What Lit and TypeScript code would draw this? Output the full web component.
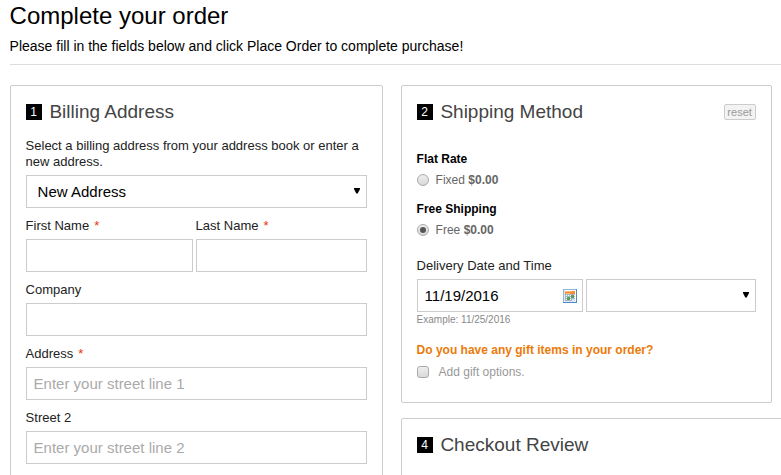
import { LitElement, html, css, nothing } from "lit";
import { customElement, property } from "lit/decorators.js";

const font = css`
  :host { box-sizing: border-box; font-family: "Liberation Sans", Arial, sans-serif; }
  *, *::before, *::after { box-sizing: border-box; }
`;

@customElement("order-panel")
class OrderPanel extends LitElement {
  @property() step = "";
  @property() heading = "";

  static styles = [font, css`
    :host { display: block; border: 1px solid #ccc; border-radius: 2px; padding: 15px; background: #fff; }
    .head { display: flex; align-items: center; height: 22px; }
    .step { width: 16px; height: 16px; margin-right: 7.8px; background: #000; color: #fff; font-size: 12px; line-height: 16px; text-align: center; }
    .title { margin: 0; flex: 1; font-size: 19px; line-height: 22px; font-weight: 400; color: #444; white-space: nowrap; }
  `];

  render() {
    return html`
      <div class="head">
        <span class="step">${this.step}</span>
        <h2 class="title">${this.heading}</h2>
        <slot name="action"></slot>
      </div>
      <slot></slot>`;
  }
}

@customElement("text-field")
class TextField extends LitElement {
  @property() label = "";
  @property() placeholder = "";
  @property({ type: Boolean }) required = false;

  static styles = [font, css`
    :host { display: block; height: 64px; }
    .label { display: block; height: 21px; font-size: 13px; line-height: 15px; color: #222; }
    .star { color: #eb340a; margin-left: 5px; }
    .input { display: block; width: 100%; height: 33px; margin: 0; padding: 0 7px; border: 1px solid #ccc; border-radius: 0; outline: 0; background: #fff; font: 15px "Liberation Sans", Arial, sans-serif; color: #000; }
    .input::placeholder { color: #aaa; opacity: 1; }
  `];

  render() {
    return html`
      <label class="label" for="f">${this.label}${this.required ? html`<span class="star">*</span>` : nothing}</label>
      <input class="input" id="f" placeholder=${this.placeholder}>`;
  }
}

@customElement("app-root")
class AppRoot extends LitElement {
  static styles = [font, css`
    :host { display: block; width: 781px; height: 475px; overflow: hidden; padding-left: 9.6px; background: #fff; color: #000; }
    .title { margin: 0; padding-top: 2px; font-size: 24px; line-height: 28px; font-weight: 400; }
    .intro { margin: 8px 0 0; height: 26px; font-size: 14px; line-height: 16px; }
    .page-head { height: 65px; border-bottom: 1px solid #ddd; }
    .columns { display: flex; align-items: flex-start; gap: 18px; margin-top: 20px; }
    .billing { width: 373px; height: 460px; flex: none; }
    .side { display: flex; flex-direction: column; gap: 15px; width: 390px; flex: none; }
    .shipping { width: 371px; height: 318px; }
    .review { width: 390px; height: 120px; }
    .note { margin: 15px 0 5px; font-size: 13px; line-height: 16px; color: #222; }
    .select { display: flex; align-items: center; justify-content: space-between; height: 33px; padding: 0 6px 0 11px; border: 1px solid #ccc; font-size: 15px; background: #fff; }
    .arrow { width: 6px; height: 6px; margin-bottom: 1px; }
    .names { display: grid; grid-template-columns: 167px 171px; gap: 3px; margin-top: 10px; }
    .reset { height: 16px; width: 32px; padding: 0; border: 1px solid #ccc; border-radius: 2px; background: #f3f3f3; color: #999; font: 11px/14px "Liberation Sans", Arial, sans-serif; }
    .rates { margin: 29px 0 0; font-size: 12px; line-height: 14px; }
    .carrier { margin: 0; height: 21px; font-weight: 700; }
    .rate { display: flex; align-items: center; height: 14px; margin-bottom: 15px; color: #666; white-space: pre; margin-top: 0; }
    .radio { width: 12px; height: 12px; margin-right: 7px; border: 1px solid #aaa; border-radius: 50%; background: linear-gradient(#eee, #d9d9d9); display: grid; place-items: center; }
    .radio.on::after { content: ""; width: 6px; height: 6px; border-radius: 50%; background: #555; }
    .delivery { margin: 21px 0 6px; font-size: 13px; line-height: 15px; color: #222; }
    .when { display: grid; grid-template-columns: 166px 170px; gap: 3px; }
    .date { display: flex; align-items: center; justify-content: space-between; height: 33px; padding: 0 5px 0 7px; border: 1px solid #ccc; font-size: 15px; }
    .calendar { margin-top: 1px; }
    .example { margin: 2px 0 0; font-size: 10px; line-height: 12px; color: #888; }
    .gift { margin: 17px 0 0; font-size: 12px; line-height: 14px; font-weight: 700; color: #eb7a0a; }
    .option { display: flex; align-items: center; margin-top: 8px; height: 14px; font-size: 12px; line-height: 14px; color: #999; }
    .check { width: 12px; height: 12px; margin-right: 10px; border: 1px solid #aaa; border-radius: 3px; background: linear-gradient(#eee, #d9d9d9); }
  `];

  arrow() {
    return html`<svg class="arrow" viewBox="0 0 6 6"><path d="M0 0h6v1L3.7 5.6H2.3L0 1z" fill="#000"/></svg>`;
  }

  calendar() {
    return html`<svg class="calendar" width="14" height="14" viewBox="0 0 14 14" shape-rendering="crispEdges">
      <path fill="#4f88c9" d="M0 0h14v14H0z"/><path fill="#8fb6e2" d="M0 0h13v1H1v12H0z"/>
      <path fill="#fff" d="M1 1h12v12H1z"/><path fill="#dfeaf7" d="M1 1h1v12h11v-1H1z"/>
      <path fill="#f58a42" d="M2 2h10v3H2z"/><path fill="#ffbb66" d="M2 2h7v1H2zM3 4h4v1H3z"/>
      <path fill="#a9b6c2" d="M2 5h10v4l-3 3H2z"/>
      <path fill="#fff" d="M3 6h1v1H3zM5 6h1v1H5zM7 6h1v1H7zM11 6h1v1h-1zM3 8h1v1H3zM7 8h1v1H7zM3 10h1v1H3zM7 10h1v1H7zM11 8h1v1h-1z"/>
      <path fill="#50a35d" d="M8 6h3v3H8zM4 8h3v3H4z"/>
      <path fill="#d5e4f4" d="M9 12v-2h3v2z"/>
    </svg>`;
  }

  rate(carrier: string, name: string, on: boolean) {
    return html`
      <p class="carrier">${carrier}</p>
      <div class="rate"><span class="radio ${on ? "on" : ""}"></span><span>${name} <b>$0.00</b></span></div>`;
  }

  render() {
    return html`
      <header class="page-head">
        <h1 class="title">Complete your order</h1>
        <p class="intro">Please fill in the fields below and click Place Order to complete purchase!</p>
      </header>
      <main class="columns">
        <order-panel class="billing" step="1" heading="Billing Address">
          <p class="note">Select a billing address from your address book or enter a new address.</p>
          <div class="select"><span>New Address</span>${this.arrow()}</div>
          <div class="names">
            <text-field label="First Name" required></text-field>
            <text-field label="Last Name" required></text-field>
          </div>
          <text-field label="Company"></text-field>
          <text-field label="Address" required placeholder="Enter your street line 1"></text-field>
          <text-field label="Street 2" placeholder="Enter your street line 2"></text-field>
        </order-panel>
        <div class="side">
          <order-panel class="shipping" step="2" heading="Shipping Method">
            <button class="reset" slot="action">reset</button>
            <div class="rates">
              ${this.rate("Flat Rate", "Fixed", false)}
              ${this.rate("Free Shipping", "Free", true)}
            </div>
            <p class="delivery">Delivery Date and Time</p>
            <div class="when">
              <div class="date"><span>11/19/2016</span>${this.calendar()}</div>
              <div class="select"><span></span>${this.arrow()}</div>
            </div>
            <p class="example">Example: 11/25/2016</p>
            <p class="gift">Do you have any gift items in your order?</p>
            <div class="option"><span class="check"></span>Add gift options.</div>
          </order-panel>
          <order-panel class="review" step="4" heading="Checkout Review"></order-panel>
        </div>
      </main>`;
  }
}
